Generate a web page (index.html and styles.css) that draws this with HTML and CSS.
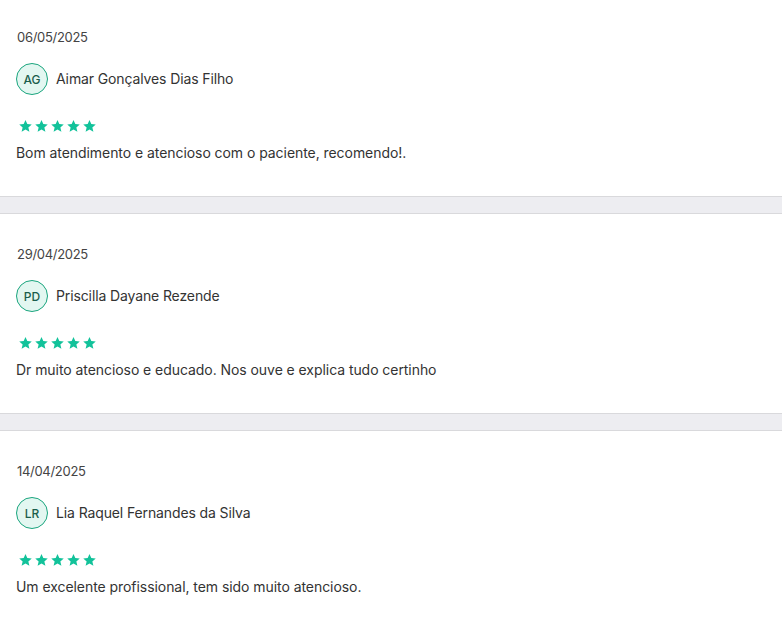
FILE: index.html
```html
<!DOCTYPE html>
<html lang="pt-BR">
<head>
    <meta charset="UTF-8">
    <meta name="viewport" content="width=device-width, initial-scale=1.0">
    <title>Avaliações</title>
    <link rel="stylesheet" href="styles.css">
</head>
<body>
    <div class="reviews">
        <div class="review">
            <div class="date">06/05/2025</div>
            <div class="author">
                <span class="avatar">AG</span>
                <span class="name">Aimar Gonçalves Dias Filho</span>
            </div>
            <div class="stars">
                <svg viewBox="0 0 26 24"><path d="M13 0l3.6 8.2 8.9.8-6.8 5.9 2.1 8.8L13 19l-7.8 4.7 2.1-8.8L.5 9l8.9-.8z"/></svg>
                <svg viewBox="0 0 26 24"><path d="M13 0l3.6 8.2 8.9.8-6.8 5.9 2.1 8.8L13 19l-7.8 4.7 2.1-8.8L.5 9l8.9-.8z"/></svg>
                <svg viewBox="0 0 26 24"><path d="M13 0l3.6 8.2 8.9.8-6.8 5.9 2.1 8.8L13 19l-7.8 4.7 2.1-8.8L.5 9l8.9-.8z"/></svg>
                <svg viewBox="0 0 26 24"><path d="M13 0l3.6 8.2 8.9.8-6.8 5.9 2.1 8.8L13 19l-7.8 4.7 2.1-8.8L.5 9l8.9-.8z"/></svg>
                <svg viewBox="0 0 26 24"><path d="M13 0l3.6 8.2 8.9.8-6.8 5.9 2.1 8.8L13 19l-7.8 4.7 2.1-8.8L.5 9l8.9-.8z"/></svg>
            </div>
            <p class="text">Bom atendimento e atencioso com o paciente, recomendo!.</p>
        </div>
        <div class="divider"></div>
        <div class="review">
            <div class="date">29/04/2025</div>
            <div class="author">
                <span class="avatar">PD</span>
                <span class="name">Priscilla Dayane Rezende</span>
            </div>
            <div class="stars">
                <svg viewBox="0 0 26 24"><path d="M13 0l3.6 8.2 8.9.8-6.8 5.9 2.1 8.8L13 19l-7.8 4.7 2.1-8.8L.5 9l8.9-.8z"/></svg>
                <svg viewBox="0 0 26 24"><path d="M13 0l3.6 8.2 8.9.8-6.8 5.9 2.1 8.8L13 19l-7.8 4.7 2.1-8.8L.5 9l8.9-.8z"/></svg>
                <svg viewBox="0 0 26 24"><path d="M13 0l3.6 8.2 8.9.8-6.8 5.9 2.1 8.8L13 19l-7.8 4.7 2.1-8.8L.5 9l8.9-.8z"/></svg>
                <svg viewBox="0 0 26 24"><path d="M13 0l3.6 8.2 8.9.8-6.8 5.9 2.1 8.8L13 19l-7.8 4.7 2.1-8.8L.5 9l8.9-.8z"/></svg>
                <svg viewBox="0 0 26 24"><path d="M13 0l3.6 8.2 8.9.8-6.8 5.9 2.1 8.8L13 19l-7.8 4.7 2.1-8.8L.5 9l8.9-.8z"/></svg>
            </div>
            <p class="text">Dr muito atencioso e educado. Nos ouve e explica tudo certinho</p>
        </div>
        <div class="divider"></div>
        <div class="review">
            <div class="date">14/04/2025</div>
            <div class="author">
                <span class="avatar">LR</span>
                <span class="name">Lia Raquel Fernandes da Silva</span>
            </div>
            <div class="stars">
                <svg viewBox="0 0 26 24"><path d="M13 0l3.6 8.2 8.9.8-6.8 5.9 2.1 8.8L13 19l-7.8 4.7 2.1-8.8L.5 9l8.9-.8z"/></svg>
                <svg viewBox="0 0 26 24"><path d="M13 0l3.6 8.2 8.9.8-6.8 5.9 2.1 8.8L13 19l-7.8 4.7 2.1-8.8L.5 9l8.9-.8z"/></svg>
                <svg viewBox="0 0 26 24"><path d="M13 0l3.6 8.2 8.9.8-6.8 5.9 2.1 8.8L13 19l-7.8 4.7 2.1-8.8L.5 9l8.9-.8z"/></svg>
                <svg viewBox="0 0 26 24"><path d="M13 0l3.6 8.2 8.9.8-6.8 5.9 2.1 8.8L13 19l-7.8 4.7 2.1-8.8L.5 9l8.9-.8z"/></svg>
                <svg viewBox="0 0 26 24"><path d="M13 0l3.6 8.2 8.9.8-6.8 5.9 2.1 8.8L13 19l-7.8 4.7 2.1-8.8L.5 9l8.9-.8z"/></svg>
            </div>
            <p class="text">Um excelente profissional, tem sido muito atencioso.</p>
        </div>
    </div>
</body>
</html>
```

FILE: styles.css
```css
body {
    font-family: Inter, "Noto Sans", Arial, sans-serif;
    margin: 0;
    padding: 0;
    background-color: white;
    color: #333333;
}
.reviews {
    display: flex;
    flex-direction: column;
}
.review {
    display: flex;
    flex-direction: column;
    height: 199px;
    box-sizing: border-box;
    padding: 31px 16px 0 16px;
}
.review:first-child {
    height: 196px;
    padding-top: 28px;
}
.date {
    font-size: 13px;
    line-height: 18px;
    letter-spacing: -0.3px;
    color: #444444;
    padding-left: 1px;
}
.author {
    display: flex;
    align-items: center;
    gap: 8px;
    margin-top: 17px;
}
.avatar {
    width: 32px;
    height: 32px;
    box-sizing: border-box;
    border-radius: 50%;
    border: 1px solid #1aa57e;
    background: #e3f7f1;
    color: #1b5e4c;
    font-size: 12px;
    font-weight: 500;
    display: flex;
    align-items: center;
    justify-content: center;
}
.name {
    font-size: 14px;
    line-height: 20px;
    letter-spacing: -0.12px;
    color: #333333;
}
.stars {
    display: flex;
    gap: 3px;
    margin-top: 25px;
    margin-left: 3px;
}
.stars svg {
    width: 13px;
    height: 12px;
    fill: #12c29a;
}
.text {
    margin: 11px 0 0 0;
    font-size: 14px;
    line-height: 20px;
    letter-spacing: -0.06px;
    color: #333333;
}
.divider {
    height: 16px;
    background: #ededf1;
    border-top: 1px solid #d9d9dc;
    border-bottom: 1px solid #d9d9dc;
}
```
